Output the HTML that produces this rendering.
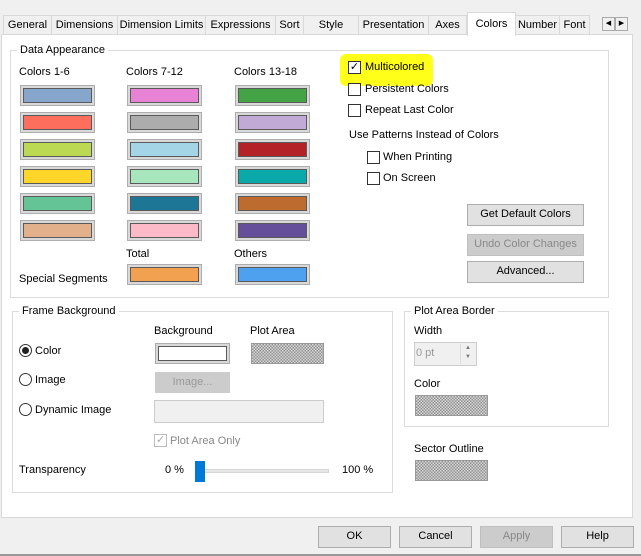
<!DOCTYPE html>
<html><head><style>
*{box-sizing:border-box;margin:0;padding:0}
body{width:641px;height:556px;background:#f0f0f0;font-family:"Liberation Sans",sans-serif;font-size:11px;color:#000;position:relative;overflow:hidden}
.a{position:absolute;white-space:nowrap}
.tab{position:absolute;top:15px;height:20px;border:1px solid #d9d9d9;border-bottom:none;background:#f0f0f0;text-align:center;line-height:19px;font-size:11px;white-space:nowrap;overflow:hidden}
.panel{position:absolute;left:1px;top:34px;width:632px;height:484px;background:#fff;border:1px solid #d9d9d9}
.grp{position:absolute;border:1px solid #dcdcdc}
.grp>span{position:absolute;top:-8px;left:6px;background:#fff;padding:0 3px;line-height:14px;white-space:nowrap}
.sw{position:absolute;width:75px;height:21px;background:#d9d9d9;border:1px solid #adadad;padding:2px}
.sw div{width:100%;height:100%;border:1px solid #5a5a5a}
.cb{position:absolute;width:13px;height:13px;border:1px solid #333;background:#fff}
.rb{position:absolute;width:13px;height:13px;border:1px solid #333;border-radius:50%;background:#fff}
.btn{position:absolute;background:#e1e1e1;border:1px solid #adadad;text-align:center;line-height:19px;white-space:nowrap}
.hatch{background:repeating-conic-gradient(#949494 0 25%,#d4d4d4 0 50%) 0 0/3px 3px !important}
</style></head><body>
<div class="tab" style="left:3px;width:49px">General</div>
<div class="tab" style="left:51px;width:67px">Dimensions</div>
<div class="tab" style="left:117px;width:89px">Dimension Limits</div>
<div class="tab" style="left:205px;width:71px">Expressions</div>
<div class="tab" style="left:275px;width:29px">Sort</div>
<div class="tab" style="left:303px;width:56px">Style</div>
<div class="tab" style="left:358px;width:71px">Presentation</div>
<div class="tab" style="left:428px;width:39px">Axes</div>
<div class="tab" style="left:559px;width:31px">Font</div>
<div class="tab" style="left:515px;width:45px">Number</div>
<div class="a" style="left:602px;top:17px;width:13px;height:14px;border:1px solid #aaa;background:#f0f0f0;font-size:7px;text-align:center;line-height:12px">◀</div>
<div class="a" style="left:615px;top:17px;width:13px;height:14px;border:1px solid #aaa;background:#f0f0f0;font-size:7px;text-align:center;line-height:12px">▶</div>
<div class="panel"></div>
<div class="tab" style="left:467px;top:12px;height:24px;width:49px;background:#fff;line-height:22px;z-index:2">Colors</div>

<div class="grp" style="left:10px;top:50px;width:599px;height:248px"><span>Data Appearance</span></div>
<div class="a" style="left:19px;top:66px">Colors 1-6</div>
<div class="a" style="left:126px;top:66px">Colors 7-12</div>
<div class="a" style="left:234px;top:66px">Colors 13-18</div>

<div class="sw" style="left:20px;top:85px"><div style="background:#86a6cc"></div></div>
<div class="sw" style="left:20px;top:112px"><div style="background:#fd6e5c"></div></div>
<div class="sw" style="left:20px;top:139px"><div style="background:#bcd954"></div></div>
<div class="sw" style="left:20px;top:166px"><div style="background:#fed62a"></div></div>
<div class="sw" style="left:20px;top:193px"><div style="background:#64c496"></div></div>
<div class="sw" style="left:20px;top:220px"><div style="background:#e3b08c"></div></div>
<div class="sw" style="left:127px;top:85px"><div style="background:#e782d4"></div></div>
<div class="sw" style="left:127px;top:112px"><div style="background:#acacac"></div></div>
<div class="sw" style="left:127px;top:139px"><div style="background:#a3d5e7"></div></div>
<div class="sw" style="left:127px;top:166px"><div style="background:#a8e7bd"></div></div>
<div class="sw" style="left:127px;top:193px"><div style="background:#1e7697"></div></div>
<div class="sw" style="left:127px;top:220px"><div style="background:#fcbac8"></div></div>
<div class="sw" style="left:235px;top:85px"><div style="background:#44a345"></div></div>
<div class="sw" style="left:235px;top:112px"><div style="background:#c1abd6"></div></div>
<div class="sw" style="left:235px;top:139px"><div style="background:#b22227"></div></div>
<div class="sw" style="left:235px;top:166px"><div style="background:#0aa9a9"></div></div>
<div class="sw" style="left:235px;top:193px"><div style="background:#be6b2f"></div></div>
<div class="sw" style="left:235px;top:220px"><div style="background:#664f9a"></div></div>
<div class="a" style="left:126px;top:248px">Total</div>
<div class="a" style="left:234px;top:248px">Others</div>
<div class="a" style="left:19px;top:273px">Special Segments</div>
<div class="sw" style="left:127px;top:264px"><div style="background:#f2a150"></div></div>
<div class="sw" style="left:235px;top:264px"><div style="background:#4ea1ef"></div></div>

<div class="a" style="left:340px;top:54px;width:93px;height:32px;background:#ffff1a;border-radius:6px"></div>
<div class="cb" style="left:348px;top:61px;font-size:11px;line-height:11px;text-align:center">✓</div>
<div class="a" style="left:365px;top:61px">Multicolored</div>
<div class="cb" style="left:348px;top:83px"></div><div class="a" style="left:365px;top:83px">Persistent Colors</div>
<div class="cb" style="left:348px;top:104px"></div><div class="a" style="left:365px;top:104px">Repeat Last Color</div>
<div class="a" style="left:349px;top:129px">Use Patterns Instead of Colors</div>
<div class="cb" style="left:367px;top:151px"></div><div class="a" style="left:383px;top:151px">When Printing</div>
<div class="cb" style="left:367px;top:172px"></div><div class="a" style="left:383px;top:172px">On Screen</div>
<div class="btn" style="left:467px;top:204px;width:117px;height:22px">Get Default Colors</div>
<div class="btn" style="left:467px;top:234px;width:117px;height:22px;background:#ccc;border-color:#bfbfbf;color:#888">Undo Color Changes</div>
<div class="btn" style="left:467px;top:261px;width:117px;height:22px">Advanced...</div>

<div class="grp" style="left:12px;top:311px;width:381px;height:182px"><span>Frame Background</span></div>
<div class="a" style="left:154px;top:325px">Background</div>
<div class="a" style="left:250px;top:325px">Plot Area</div>
<div class="rb" style="left:19px;top:344px"><div style="margin:2px;width:7px;height:7px;border-radius:50%;background:#222"></div></div>
<div class="a" style="left:35px;top:345px">Color</div>
<div class="sw" style="left:155px;top:343px;width:75px;background:#d9d9d9"><div style="background:#fff"></div></div>
<div class="sw hatch" style="left:251px;top:343px;width:73px;border-color:#999"></div>
<div class="rb" style="left:19px;top:373px"></div><div class="a" style="left:35px;top:374px">Image</div>
<div class="btn" style="left:155px;top:372px;width:75px;height:21px;background:#ccc;border-color:#ccc;color:#999">Image...</div>
<div class="rb" style="left:19px;top:403px"></div><div class="a" style="left:35px;top:404px">Dynamic Image</div>
<div class="a" style="left:154px;top:400px;width:170px;height:23px;background:#f0f0f0;border:1px solid #ccc"></div>
<div class="cb" style="left:154px;top:434px;border-color:#bbb;color:#aaa;font-size:11px;line-height:11px;text-align:center">✓</div>
<div class="a" style="left:170px;top:435px;color:#888">Plot Area Only</div>
<div class="a" style="left:19px;top:464px">Transparency</div>
<div class="a" style="left:165px;top:464px">0 %</div>
<div class="a" style="left:200px;top:469px;width:129px;height:4px;background:#e7e7e7;border:1px solid #d6d6d6"></div>
<div class="a" style="left:195px;top:461px;width:10px;height:21px;background:#0078d7"></div>
<div class="a" style="left:342px;top:464px">100 %</div>

<div class="grp" style="left:404px;top:311px;width:205px;height:116px"><span>Plot Area Border</span></div>
<div class="a" style="left:414px;top:325px">Width</div>
<div class="a" style="left:414px;top:342px;width:63px;height:24px;background:#f0f0f0;border:1px solid #ccc;color:#999;padding:4px 1px">0 pt</div>
<div class="a" style="left:460px;top:344px;width:15px;height:20px;border-left:1px solid #ddd;font-size:6px;color:#777;text-align:center;line-height:9px">▲<br>▼</div>
<div class="a" style="left:414px;top:378px">Color</div>
<div class="sw hatch" style="left:415px;top:395px;width:73px;border-color:#999"></div>
<div class="a" style="left:414px;top:443px">Sector Outline</div>
<div class="sw hatch" style="left:415px;top:460px;width:73px;border-color:#999"></div>

<div class="btn" style="left:318px;top:526px;width:73px;height:22px">OK</div>
<div class="btn" style="left:399px;top:526px;width:73px;height:22px">Cancel</div>
<div class="btn" style="left:480px;top:526px;width:73px;height:22px;background:#ccc;border-color:#bfbfbf;color:#888">Apply</div>
<div class="btn" style="left:561px;top:526px;width:73px;height:22px">Help</div>
<div class="a" style="left:0;top:554px;width:641px;height:2px;background:#999"></div>
</body></html>
